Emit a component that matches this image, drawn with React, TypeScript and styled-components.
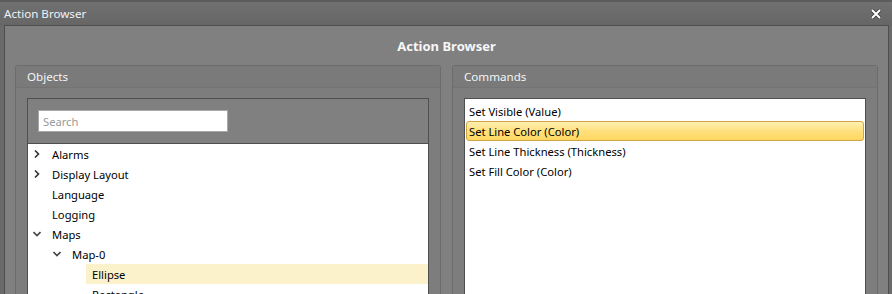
import React from "react"
import styled, { createGlobalStyle } from "styled-components"

const GlobalStyle = createGlobalStyle`
  html, body {
    margin: 0;
    padding: 0;
    background: #6a6a6a;
    overflow: hidden;
  }
  body {
    font-family: "Noto Sans", "Open Sans", sans-serif;
  }
`

const Window = styled.div`
  width: 892px;
  height: 294px;
  display: flex;
  flex-direction: column;
  background: #6a6a6a;
  border-top: 2px solid #5c5c5c;
  box-sizing: border-box;
  overflow: hidden;
`

const TitleBar = styled.div`
  height: 23px;
  flex: none;
  display: flex;
  align-items: center;
  justify-content: space-between;
  padding: 0 10px 0 4px;
  background: linear-gradient(#717171, #666666);
  color: #eef3f8;
  font-size: 11.6px;
`

const CloseButton = styled.div`
  width: 12px;
  height: 12px;
  display: flex;
  align-items: center;
  justify-content: center;
`

const Dialog = styled.div`
  flex: 1;
  margin: 0 3px 0 4px;
  border: 1px solid #4e4e4e;
  border-bottom: none;
  background: #808080;
  display: flex;
  flex-direction: column;
  min-height: 0;
`

const Heading = styled.div`
  height: 39px;
  flex: none;
  display: flex;
  align-items: center;
  justify-content: center;
  color: #f7f7f7;
  font-size: 13px;
  font-weight: bold;
`

const PanelRow = styled.div`
  flex: 1;
  display: flex;
  gap: 11px;
  padding: 0 10px;
  min-height: 0;
`

const Panel = styled.div`
  flex: 1;
  display: flex;
  flex-direction: column;
  border: 1px solid #6c6c6c;
  border-bottom: none;
  border-radius: 3px 3px 0 0;
  background: #7d7d7d;
  min-height: 0;
`

const PanelHeader = styled.div`
  height: 21px;
  flex: none;
  display: flex;
  align-items: center;
  padding-left: 11px;
  background: #7a7a7a;
  border-bottom: 1px solid #747474;
  color: #f2f4f6;
  font-size: 11.6px;
`

const PanelBody = styled.div`
  flex: 1;
  display: flex;
  padding: 10px 11px 0 11px;
  min-height: 0;
`

const Box = styled.div`
  flex: 1;
  display: flex;
  flex-direction: column;
  border: 1px solid #4f4f4f;
  border-bottom: none;
  min-height: 0;
`

const SearchArea = styled.div`
  height: 44px;
  flex: none;
  display: flex;
  align-items: center;
  padding-left: 10px;
  background: #808080;
  border-bottom: 1px solid #4f4f4f;
`

const SearchInput = styled.input`
  width: 190px;
  height: 22px;
  box-sizing: border-box;
  border: 1px solid #a8a8a8;
  outline: none;
  padding: 0 4px;
  font-family: inherit;
  font-size: 11.2px;
  color: #000;
  background: #fff;
  &::placeholder {
    color: #9a9a9a;
  }
`

const List = styled.div<{ $padTop?: number }>`
  flex: 1;
  background: #ffffff;
  padding-top: ${(p) => p.$padTop || 0}px;
  overflow: hidden;
`

const TreeRow = styled.div<{ $level: number }>`
  height: 20px;
  display: flex;
  align-items: center;
  padding-left: ${(p) => p.$level * 20}px;
  font-size: 11.2px;
  color: #000;
`

const TreeLabel = styled.span<{ $selected?: boolean }>`
  flex: 1;
  height: 20px;
  display: flex;
  align-items: center;
  padding-left: 6px;
  background: ${(p) => (p.$selected ? "#fbf2cc" : "transparent")};
`

const Toggle = styled.span`
  width: 18px;
  height: 20px;
  flex: none;
  display: flex;
  align-items: center;
  justify-content: center;
`

const CommandRow = styled.div<{ $selected?: boolean }>`
  height: 20px;
  box-sizing: border-box;
  display: flex;
  align-items: center;
  margin: 0 1px;
  padding-left: 2px;
  font-size: 11.2px;
  color: #000;
  border: 1px solid ${(p) => (p.$selected ? "#d0a446" : "transparent")};
  border-radius: 3px;
  background: ${(p) =>
    p.$selected ? "linear-gradient(#fff1b0, #ffe07e 50%, #ffd861)" : "transparent"};
`

const ChevronRight = () => (
  <svg width="6" height="8" viewBox="0 0 6 8">
    <path d="M1 0.5 L4.5 4 L1 7.5" fill="none" stroke="#333" strokeWidth="1.6" />
  </svg>
)

const ChevronDown = () => (
  <svg width="8" height="6" viewBox="0 0 8 6">
    <path d="M0.5 1 L4 4.5 L7.5 1" fill="none" stroke="#444" strokeWidth="1.6" />
  </svg>
)

const CloseIcon = () => (
  <svg width="12" height="10" viewBox="0 0 12 10">
    <path d="M2 1 L10 9 M10 1 L2 9" stroke="#3a3a3a" strokeWidth="3.6" />
    <path d="M2 1 L10 9 M10 1 L2 9" stroke="#ffffff" strokeWidth="2" />
  </svg>
)

const tree = [
  { label: "Alarms", level: 0, toggle: "right" },
  { label: "Display Layout", level: 0, toggle: "right" },
  { label: "Language", level: 0 },
  { label: "Logging", level: 0 },
  { label: "Maps", level: 0, toggle: "down" },
  { label: "Map-0", level: 1, toggle: "down" },
  { label: "Ellipse", level: 2, selected: true },
  { label: "Rectangle", level: 2 },
]

const commands = [
  "Set Visible (Value)",
  "Set Line Color (Color)",
  "Set Line Thickness (Thickness)",
  "Set Fill Color (Color)",
]

const App = () => {
  return (
    <>
      <GlobalStyle />
      <Window>
        <TitleBar>
          <span>Action Browser</span>
          <CloseButton>
            <CloseIcon />
          </CloseButton>
        </TitleBar>
        <Dialog>
          <Heading>Action Browser</Heading>
          <PanelRow>
            <Panel>
              <PanelHeader>Objects</PanelHeader>
              <PanelBody>
                <Box>
                  <SearchArea>
                    <SearchInput placeholder="Search" />
                  </SearchArea>
                  <List>
                    {tree.map((item) => (
                      <TreeRow key={item.label} $level={item.level}>
                        <Toggle>
                          {item.toggle === "right" && <ChevronRight />}
                          {item.toggle === "down" && <ChevronDown />}
                        </Toggle>
                        <TreeLabel $selected={item.selected}>{item.label}</TreeLabel>
                      </TreeRow>
                    ))}
                  </List>
                </Box>
              </PanelBody>
            </Panel>
            <Panel>
              <PanelHeader>Commands</PanelHeader>
              <PanelBody>
                <Box>
                  <List $padTop={2}>
                    {commands.map((c, i) => (
                      <CommandRow key={c} $selected={i === 1}>
                        {c}
                      </CommandRow>
                    ))}
                  </List>
                </Box>
              </PanelBody>
            </Panel>
          </PanelRow>
        </Dialog>
      </Window>
    </>
  )
}

export default App
